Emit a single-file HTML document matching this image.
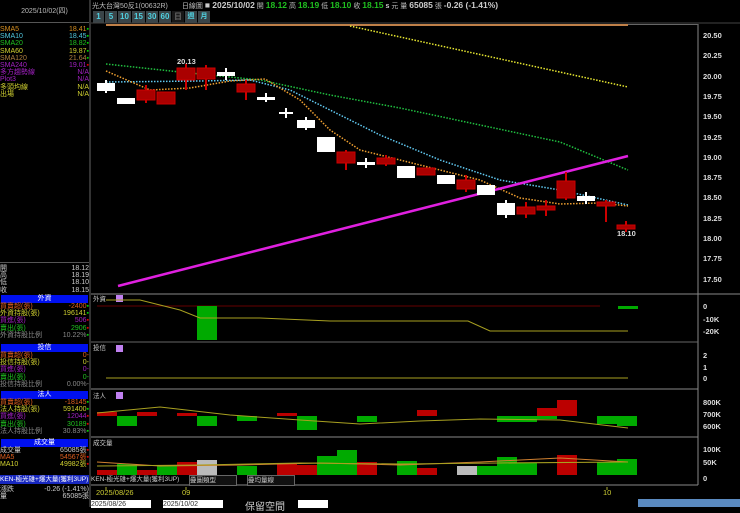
<!DOCTYPE html>
<html><head><meta charset="utf-8"><style>
body{margin:0;width:740px;height:507px;background:#000;overflow:hidden;position:relative;font-family:"Liberation Sans","Noto Sans CJK TC",sans-serif;}
.a{position:absolute;white-space:nowrap;}
.lp{position:absolute;left:0;width:89px;font-size:7px;line-height:7.2px;}
.row{display:flex;justify-content:space-between;height:7.2px;}
.hd{background:#0010f0;color:#fff;text-align:center;font-size:7px;height:8px;line-height:8px;margin:0 1px;}
.btn{position:absolute;top:11px;height:12px;background:#3a4448;color:#4fd0e0;font-size:8px;font-weight:bold;line-height:12px;text-align:center;}
</style></head><body>
<!-- left panel -->
<div class="a" style="left:0;top:0;width:89px;height:22px;border-bottom:1px solid #555;color:#bbb;font-size:7px;text-align:center;line-height:24px">2025/10/02(四)</div>
<div style="position:absolute;left:89px;top:0;width:2px;height:507px;background:#333"></div>
<div class="lp" style="top:26px">
<div class="row" style="color:#d89020"><span>SMA5</span><span>18.41<b style="color:#0c0">▪</b></span></div>
<div class="row" style="color:#50c8e0"><span>SMA10</span><span>18.45<b style="color:#0c0">▪</b></span></div>
<div class="row" style="color:#20c020"><span>SMA20</span><span>18.82<b style="color:#0c0">▪</b></span></div>
<div class="row" style="color:#d0d030"><span>SMA60</span><span>19.87<b style="color:#0c0">▪</b></span></div>
<div class="row" style="color:#b08040"><span>SMA120</span><span>21.64<b style="color:#0c0">▪</b></span></div>
<div class="row" style="color:#a020c0"><span>SMA240</span><span>19.01<b style="color:#d00">▪</b></span></div>
<div class="row" style="color:#a020c0"><span>多方趨勢線</span><span>N/A</span></div>
<div class="row" style="color:#a020c0"><span>Plot3</span><span>N/A</span></div>
<div class="row" style="color:#d0d030"><span>多頭均線</span><span>N/A</span></div>
<div class="row" style="color:#d0d030"><span>出場</span><span>N/A</span></div>
</div>
<div class="lp" style="top:262px;color:#ccc;border-top:1px solid #555;padding-top:2px">
<div class="row"><span>開</span><span>18.12</span></div>
<div class="row"><span>高</span><span>18.19</span></div>
<div class="row"><span>低</span><span>18.10</span></div>
<div class="row"><span>收</span><span>18.15</span></div>
</div>
<div class="lp" style="top:295px">
<div class="hd">外資</div>
<div class="row" style="color:#e06020"><span>買賣超(張)</span><span>-2400<b style="color:#0c0">▪</b></span></div>
<div class="row" style="color:#d0d030"><span>外資持股(張)</span><span>196141<b style="color:#0c0">▪</b></span></div>
<div class="row" style="color:#a020c0"><span>買進(張)</span><span>506<b style="color:#d00">▪</b></span></div>
<div class="row" style="color:#20c020"><span>賣出(張)</span><span>2906<b style="color:#d00">▪</b></span></div>
<div class="row" style="color:#888"><span>外資持股比例</span><span>10.22%<b style="color:#0c0">▪</b></span></div>
</div>
<div class="lp" style="top:344px">
<div class="hd">投信</div>
<div class="row" style="color:#e06020"><span>買賣超(張)</span><span>0-</span></div>
<div class="row" style="color:#d0d030"><span>投信持股(張)</span><span>0-</span></div>
<div class="row" style="color:#a020c0"><span>買進(張)</span><span>0-</span></div>
<div class="row" style="color:#20c020"><span>賣出(張)</span><span>0-</span></div>
<div class="row" style="color:#888"><span>投信持股比例</span><span>0.00%-</span></div>
</div>
<div class="lp" style="top:391px">
<div class="hd">法人</div>
<div class="row" style="color:#e06020"><span>買賣超(張)</span><span>-18145<b style="color:#0c0">▪</b></span></div>
<div class="row" style="color:#d0d030"><span>法人持股(張)</span><span>591400<b style="color:#0c0">▪</b></span></div>
<div class="row" style="color:#a020c0"><span>買進(張)</span><span>12044<b style="color:#d00">▪</b></span></div>
<div class="row" style="color:#20c020"><span>賣出(張)</span><span>30189<b style="color:#d00">▪</b></span></div>
<div class="row" style="color:#888"><span>法人持股比例</span><span>30.83%<b style="color:#0c0">▪</b></span></div>
</div>
<div class="lp" style="top:439px">
<div class="hd">成交量</div>
<div class="row" style="color:#ccc"><span>成交量</span><span>65085張<b style="color:#d00">▪</b></span></div>
<div class="row" style="color:#e06020"><span>MA5</span><span>54567張<b style="color:#d00">▪</b></span></div>
<div class="row" style="color:#d0d030"><span>MA10</span><span>49982張<b style="color:#d00">▪</b></span></div>
</div>
<div class="a" style="left:0;top:475px;width:89px;height:9px;background:#1828c0;color:#fff;font-size:6.5px;line-height:9px">KEN-極光雄+爆大量(獲利3UP)</div>
<div class="lp" style="top:486px;color:#ccc">
<div class="row"><span>漲跌</span><span>-0.26 (-1.41%)</span></div>
<div class="row"><span>量</span><span>65085張</span></div>
</div>

<!-- top bar -->
<div class="a" style="left:92px;top:0;height:11px;font-size:7px;line-height:11px;color:#bbb">光大台灣50反1(00632R)　　日線圖 <span style="color:#ccc;font-size:8.5px;font-weight:bold">■ 2025/10/02</span> 開 <b style="color:#20c020;font-size:8.5px">18.12</b> 高 <b style="color:#20c020;font-size:8.5px">18.19</b> 低 <b style="color:#20c020;font-size:8.5px">18.10</b> 收 <b style="color:#20c020;font-size:8.5px">18.15</b> <b style="color:#ccc">s</b> 元 量 <b style="color:#ccc;font-size:8.5px">65085</b> 張 <b style="color:#ccc;font-size:8.5px">-0.26 (-1.41%)</b></div>
<div class="btn" style="left:93px;width:11px">1</div>
<div class="btn" style="left:105px;width:12px">5</div>
<div class="btn" style="left:118px;width:13px">10</div>
<div class="btn" style="left:132px;width:13px">15</div>
<div class="btn" style="left:146px;width:12px">30</div>
<div class="btn" style="left:159px;width:12px">60</div>
<div class="btn" style="left:172px;width:12px;background:#181818;color:#666">日</div>
<div class="btn" style="left:185px;width:12px;font-size:7px">週</div>
<div class="btn" style="left:198px;width:12px;font-size:7px">月</div>

<svg class="a" style="left:0;top:0" width="740" height="507">
<defs><style>text{font-family:"Liberation Sans",sans-serif;font-size:7.5px;fill:#ddd;font-weight:bold}</style></defs>
<!-- frame -->
<line x1="91" y1="23" x2="740" y2="23" stroke="#444"/>
<line x1="698" y1="24" x2="698" y2="485" stroke="#888"/>
<line x1="106" y1="25" x2="628" y2="25" stroke="#c08048" stroke-width="2"/>
<line x1="628" y1="24.5" x2="698" y2="24.5" stroke="#666"/>
<g text-anchor="start">
<text x="703" y="38">20.50</text><text x="703" y="58">20.25</text><text x="703" y="79">20.00</text><text x="703" y="99">19.75</text><text x="703" y="119">19.50</text><text x="703" y="140">19.25</text><text x="703" y="160">19.00</text><text x="703" y="180">18.75</text><text x="703" y="200">18.50</text><text x="703" y="221">18.25</text><text x="703" y="241">18.00</text><text x="703" y="261">17.75</text><text x="703" y="282">17.50</text>
</g>
<!-- MA lines -->
<polyline points="350,26 628,87" fill="none" stroke="#e8e830" stroke-width="1.5" stroke-dasharray="1.5,1.5"/>
<polyline points="106,64 180,72 260,80 330,95 400,108 480,125 560,142 628,170" fill="none" stroke="#20c040" stroke-width="1.5" stroke-dasharray="1.5,1.5"/>
<polyline points="106,82 200,81 250,80 290,90 330,110 380,135 440,160 500,180 560,190 628,205" fill="none" stroke="#60c8f0" stroke-width="1.5" stroke-dasharray="1.5,1.5"/>
<polyline points="106,71 150,90 190,88 230,81 265,79 300,100 330,130 360,150 400,160 440,170 480,180 520,198 560,204 600,203 628,206" fill="none" stroke="#f0a030" stroke-width="1.5" stroke-dasharray="1.5,1.5"/>
<line x1="118" y1="286" x2="628" y2="156" stroke="#e020e0" stroke-width="2.5"/>
<!-- candles -->
<g stroke-width="2">
<line x1="106" y1="80" x2="106" y2="93" stroke="#fff"/><rect x="97" y="83" width="18" height="8" fill="#fff"/>
<rect x="117" y="98" width="18" height="6" fill="#fff"/>
<line x1="146" y1="85" x2="146" y2="103" stroke="#c00"/><rect x="137" y="90" width="18" height="10" fill="#a00" stroke="#c00" stroke-width="1"/>
<rect x="157" y="92" width="18" height="12" fill="#a00" stroke="#c00" stroke-width="1"/>
<line x1="186" y1="64" x2="186" y2="90" stroke="#c00"/><rect x="177" y="68" width="18" height="12" fill="#a00" stroke="#c00" stroke-width="1"/>
<line x1="206" y1="65" x2="206" y2="90" stroke="#c00"/><rect x="197" y="68" width="18" height="11" fill="#a00" stroke="#c00" stroke-width="1"/>
<line x1="226" y1="68" x2="226" y2="80" stroke="#fff"/><rect x="217" y="72" width="18" height="4" fill="#fff"/>
<line x1="246" y1="80" x2="246" y2="100" stroke="#c00"/><rect x="237" y="84" width="18" height="8" fill="#a00" stroke="#c00" stroke-width="1"/>
<line x1="266" y1="93" x2="266" y2="102" stroke="#fff"/><rect x="257" y="97" width="18" height="3" fill="#fff"/>
<line x1="286" y1="108" x2="286" y2="118" stroke="#fff"/><rect x="279" y="112" width="14" height="2" fill="#fff"/>
<line x1="306" y1="117" x2="306" y2="130" stroke="#fff"/><rect x="297" y="120" width="18" height="8" fill="#fff"/>
<rect x="317" y="137" width="18" height="15" fill="#fff"/>
<line x1="346" y1="150" x2="346" y2="170" stroke="#c00"/><rect x="337" y="152" width="18" height="11" fill="#a00" stroke="#c00" stroke-width="1"/>
<line x1="366" y1="158" x2="366" y2="168" stroke="#fff"/><rect x="357" y="162" width="18" height="3" fill="#fff"/>
<line x1="386" y1="155" x2="386" y2="166" stroke="#c00"/><rect x="377" y="158" width="18" height="6" fill="#a00" stroke="#c00" stroke-width="1"/>
<rect x="397" y="166" width="18" height="12" fill="#fff"/>
<rect x="417" y="168" width="18" height="7" fill="#a00" stroke="#c00" stroke-width="1"/>
<rect x="437" y="175" width="18" height="9" fill="#fff"/>
<line x1="466" y1="175" x2="466" y2="192" stroke="#c00"/><rect x="457" y="180" width="18" height="9" fill="#a00" stroke="#c00" stroke-width="1"/>
<rect x="477" y="185" width="18" height="10" fill="#fff"/>
<line x1="506" y1="200" x2="506" y2="218" stroke="#fff"/><rect x="497" y="203" width="18" height="12" fill="#fff"/>
<line x1="526" y1="202" x2="526" y2="218" stroke="#c00"/><rect x="517" y="207" width="18" height="7" fill="#a00" stroke="#c00" stroke-width="1"/>
<line x1="546" y1="200" x2="546" y2="216" stroke="#c00"/><rect x="537" y="206" width="18" height="4" fill="#a00" stroke="#c00" stroke-width="1"/>
<line x1="566" y1="172" x2="566" y2="200" stroke="#c00"/><rect x="557" y="181" width="18" height="17" fill="#a00" stroke="#c00" stroke-width="1"/>
<rect x="577" y="196" width="18" height="5" fill="#fff"/><line x1="586" y1="192" x2="586" y2="204" stroke="#fff"/>
<line x1="606" y1="200" x2="606" y2="222" stroke="#c00"/><rect x="597" y="202" width="18" height="4" fill="#a00" stroke="#c00" stroke-width="1"/>
<line x1="626" y1="221" x2="626" y2="232" stroke="#c00"/><rect x="617" y="225" width="18" height="4" fill="#a00" stroke="#c00" stroke-width="1"/>
</g>
<text x="177" y="64">20.13</text><text x="617" y="236">18.10</text>

<!-- sub panels -->
<g stroke="#888"><line x1="91" y1="294" x2="740" y2="294"/><line x1="91" y1="342" x2="698" y2="342" stroke="#666"/><line x1="91" y1="389" x2="698" y2="389"/><line x1="91" y1="437" x2="698" y2="437"/><line x1="91" y1="485" x2="698" y2="485"/></g>
<g style="font-size:6.5px"><text x="93" y="301" style="font-size:6.5px;font-weight:normal;fill:#ccc">外資</text><text x="93" y="350" style="font-size:6.5px;font-weight:normal;fill:#ccc">投信</text><text x="93" y="398" style="font-size:6.5px;font-weight:normal;fill:#ccc">法人</text><text x="93" y="445" style="font-size:6.5px;font-weight:normal;fill:#ccc">成交量</text></g>
<rect x="116" y="295" width="7" height="7" fill="#c080f0"/><rect x="116" y="345" width="7" height="7" fill="#c080f0"/><rect x="116" y="392" width="7" height="7" fill="#c080f0"/>
<!-- 外資 -->
<line x1="97" y1="306" x2="600" y2="306" stroke="#600" stroke-width="1"/>
<rect x="197" y="306" width="20" height="34" fill="#0a0"/>
<rect x="618" y="306" width="20" height="3" fill="#0a0"/>
<polyline points="106,300 140,300 180,310 200,318 260,318 330,321 468,321 490,331 628,331" fill="none" stroke="#a8a020"/>
<text x="703" y="309">0</text><text x="703" y="322">-10K</text><text x="703" y="334">-20K</text>
<!-- 投信 -->
<line x1="106" y1="378" x2="628" y2="378" stroke="#a8a020"/>
<text x="703" y="358">2</text><text x="703" y="370">1</text><text x="703" y="381">0</text>
<!-- 法人 -->
<g fill="#0a0">
<rect x="117" y="416" width="20" height="10"/><rect x="197" y="416" width="20" height="10"/><rect x="237" y="416" width="20" height="5"/><rect x="297" y="416" width="20" height="14"/><rect x="357" y="416" width="20" height="6"/><rect x="497" y="416" width="20" height="6"/><rect x="517" y="416" width="20" height="6"/><rect x="537" y="416" width="20" height="3"/><rect x="597" y="416" width="20" height="8"/><rect x="617" y="416" width="20" height="10"/>
</g>
<g fill="#b00"><rect x="97" y="412" width="20" height="4"/><rect x="137" y="412" width="20" height="4"/><rect x="177" y="413" width="20" height="3"/><rect x="277" y="413" width="20" height="3"/><rect x="417" y="410" width="20" height="6"/><rect x="537" y="408" width="20" height="8"/><rect x="557" y="400" width="20" height="16"/></g>
<polyline points="97,413 160,407 230,415 300,420 360,424 420,421 480,419 560,420 628,428" fill="none" stroke="#a8a020"/>
<text x="703" y="405">800K</text><text x="703" y="417">700K</text><text x="703" y="429">600K</text>
<!-- 成交量 -->
<g fill="#0a0"><rect x="117" y="464" width="20" height="11"/><rect x="157" y="465" width="20" height="10"/><rect x="237" y="466" width="20" height="9"/><rect x="317" y="456" width="20" height="19"/><rect x="337" y="450" width="20" height="25"/><rect x="397" y="461" width="20" height="14"/><rect x="477" y="466" width="20" height="9"/><rect x="497" y="457" width="20" height="18"/><rect x="517" y="463" width="20" height="12"/><rect x="597" y="462" width="20" height="13"/><rect x="617" y="459" width="20" height="16"/></g>
<g fill="#b00"><rect x="97" y="470" width="20" height="5"/><rect x="137" y="470" width="20" height="5"/><rect x="177" y="462" width="20" height="13"/><rect x="277" y="464" width="20" height="11"/><rect x="357" y="462" width="20" height="13"/><rect x="417" y="468" width="20" height="7"/><rect x="557" y="455" width="20" height="20"/><rect x="297" y="465" width="20" height="10"/></g>
<rect x="197" y="460" width="20" height="15" fill="#bbb"/><rect x="457" y="466" width="20" height="9" fill="#bbb"/>
<polyline points="97,462 160,466 240,465 320,463 400,465 480,462 560,458 628,462" fill="none" stroke="#d08030"/>
<polyline points="97,466 200,465 300,463 400,464 500,463 628,462" fill="none" stroke="#a8a020"/>
<text x="703" y="452">100K</text><text x="703" y="465">50K</text><text x="703" y="481">0</text>
<!-- date axis -->
<line x1="106" y1="487" x2="106" y2="490" stroke="#aa3"/><line x1="186" y1="487" x2="186" y2="490" stroke="#aa3"/><line x1="607" y1="487" x2="607" y2="490" stroke="#aa3"/>
<text x="96" y="495" style="fill:#cc3;font-weight:normal">2025/08/26</text><text x="182" y="495" style="fill:#cc3;font-weight:normal">09</text><text x="603" y="495" style="fill:#cc3;font-weight:normal">10</text>
</svg>
<div class="a" style="left:91px;top:475px;width:100px;height:9px;color:#ccc;font-size:6.5px;line-height:9px">KEN-極光雄+爆大量(獲利3UP)</div>
<div class="a" style="left:189px;top:475px;width:46px;height:9px;border:1px solid #666;background:#111;color:#ccc;font-size:6.5px;line-height:9px">疊圖類型</div>
<div class="a" style="left:247px;top:475px;width:46px;height:9px;border:1px solid #666;background:#111;color:#ccc;font-size:6.5px;line-height:9px">疊均量線</div>
<div class="a" style="left:91px;top:500px;width:60px;height:8px;background:#fff;color:#333;font-size:7px;line-height:10px">2025/08/26</div>
<div class="a" style="left:163px;top:500px;width:60px;height:8px;background:#fff;color:#333;font-size:7px;line-height:10px">2025/10/02</div>
<div class="a" style="left:245px;top:498px;color:#ccc;font-size:10px">保留空間</div>
<div class="a" style="left:298px;top:500px;width:30px;height:8px;background:#fff"></div>
<div class="a" style="left:638px;top:499px;width:102px;height:8px;background:#5a8ac0"></div>
</body></html>
